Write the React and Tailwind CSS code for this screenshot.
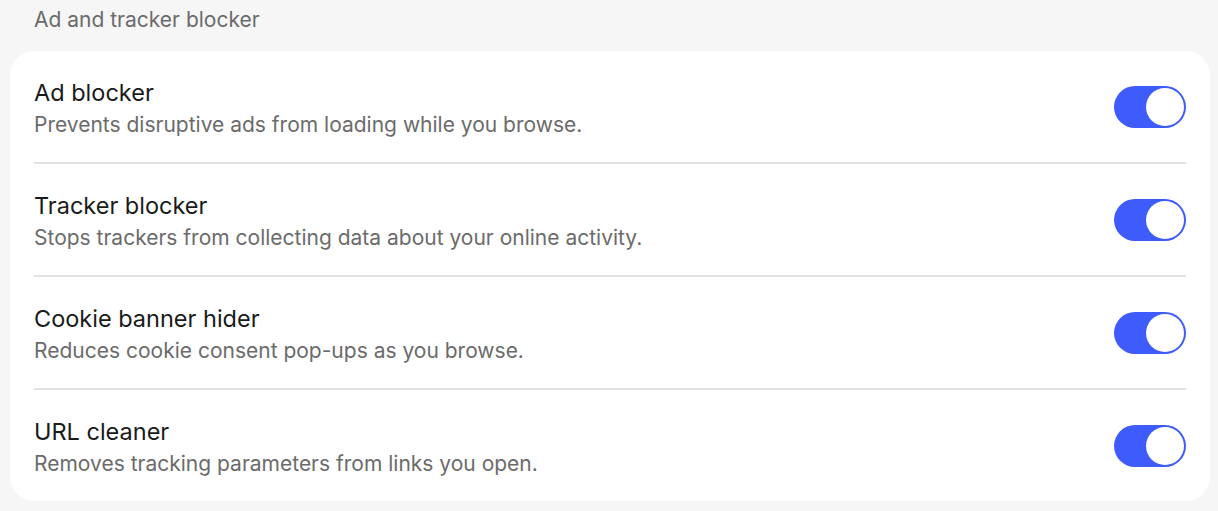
const items = [
  {
    title: 'Ad blocker',
    desc: 'Prevents disruptive ads from loading while you browse.',
  },
  {
    title: 'Tracker blocker',
    desc: 'Stops trackers from collecting data about your online activity.',
  },
  {
    title: 'Cookie banner hider',
    desc: 'Reduces cookie consent pop-ups as you browse.',
  },
  {
    title: 'URL cleaner',
    desc: 'Removes tracking parameters from links you open.',
  },
];

function Toggle() {
  return (
    <div className="relative w-[72px] h-[42px] rounded-full bg-[#3d5cfb] shrink-0">
      <div className="absolute right-[2px] top-[2px] w-[38px] h-[38px] rounded-full bg-white" />
    </div>
  );
}

export default function App() {
  return (
    <div className="min-h-[511px] bg-[#f6f6f6] pl-[10px] font-['Inter',sans-serif]">
      <div className="px-[24px] pt-[4px] h-[51px] text-[21px] text-[#6b6b6b]">
        Ad and tracker blocker
      </div>
      <div className="w-[1200px] bg-white rounded-[24px] px-[24px]">
        {items.map((item, i) => (
          <div
            key={item.title}
            className={`flex items-center justify-between ${
              i < items.length - 1 ? 'h-[113px] border-b-[2px] border-[#e2e2e2]' : 'h-[111px]'
            }`}
          >
            <div className="flex flex-col mt-[5px]">
              <div className="text-[23.5px] leading-[30px] text-[#1a1a1a]">{item.title}</div>
              <div className="text-[21px] leading-[33px] text-[#6b6b6b]">{item.desc}</div>
            </div>
            <Toggle />
          </div>
        ))}
      </div>
    </div>
  );
}
